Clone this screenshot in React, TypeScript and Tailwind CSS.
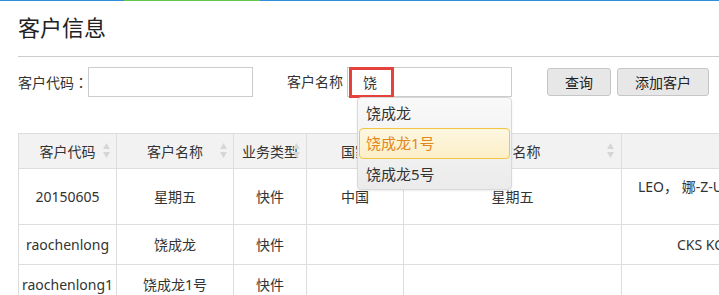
import React from "react";

function SortIcon({ right = 6 }: { right?: number }) {
  return (
    <svg
      width="7"
      height="15"
      viewBox="0 0 7 15"
      className={right === 7 ? "absolute right-[7px] top-[9px]" : "absolute right-[6px] top-[9px]"}
    >
      <polygon points="0,6 3.5,0 7,6" fill="#d6d6d6" />
      <polygon points="0,9 3.5,15 7,9" fill="#d6d6d6" />
    </svg>
  );
}

const cell = "relative box-border shrink-0 border-r border-b border-[#dddddd] flex items-center justify-center text-[14px] whitespace-nowrap";

export default function App() {
  return (
    <div className="relative w-[719px] h-[295px] overflow-hidden bg-white font-['Noto_Sans','Noto_Sans_CJK_SC',sans-serif] text-[#333]">
      <div className="flex h-px">
        <div className="w-[124px] bg-[#2e90dc]" />
        <div className="w-[136px] bg-[#62c64a]" />
        <div className="flex-1 bg-[#2e90dc]" />
      </div>
      <div className="pl-[18px]">
        <h1 className="mt-[11px] text-[22px] leading-[30px] text-[#222]">客户信息</h1>
        <div className="mt-[14px] h-px bg-[#cccccc]" />

        <div className="mt-[10px] flex items-center h-[30px]">
          <span className="w-[70px] text-[14px] leading-[20px]">
            客户代码<span className="font-['Noto_Sans_CJK_TC',sans-serif]">：</span>
          </span>
          <div className="box-border w-[165px] h-[30px] border border-[#cccccc]" />
          <span className="ml-[34px] w-[56px] text-[14px] leading-[20px]">客户名称</span>
          <div className="relative box-border ml-[4px] w-[165px] h-[30px] border border-[#cccccc] pl-[15px] flex items-center text-[14px]">
            饶
            <div className="absolute left-px top-[-1px] box-border w-[45px] h-[31px] border-[3px] border-[#e5423b]" />
            <div className="absolute left-[9px] top-[29px] z-10 box-border w-[155px] h-[93px] border border-[#d9d9d9] rounded-[4px] bg-linear-to-b from-[#f9f9f9] to-[#ebebeb] shadow-[0_1px_2px_rgba(0,0,0,0.08)] flex flex-col text-[15px] text-[#333]">
              <div className="h-[30px] flex items-center pl-[8px]">饶成龙</div>
              <div className="mx-px box-border h-[32px] flex items-center pl-[6px] border border-[#f3c544] rounded-[4px] bg-linear-to-b from-[#fdf7e1] to-[#fcefc7] text-[#e3861d]">
                饶成龙1号
              </div>
              <div className="h-[30px] flex items-center pl-[8px]">饶成龙5号</div>
            </div>
          </div>
          <button className="ml-[35px] box-border w-[64px] h-[28px] border border-[#c6c6c6] rounded-[3px] bg-[#e7e7e7] text-[14px] text-[#222]">
            查询
          </button>
          <button className="ml-[6px] box-border w-[92px] h-[28px] border border-[#c6c6c6] rounded-[3px] bg-[#e7e7e7] text-[14px] text-[#222]">
            添加客户
          </button>
        </div>

        <div className="mt-[36px] w-[1100px] border-t border-l border-[#dddddd]">
          <div className="flex h-[35px] bg-[#f2f2f2]">
            <div className={`${cell} w-[98px]`}>客户代码<SortIcon /></div>
            <div className={`${cell} w-[117px]`}>客户名称<SortIcon /></div>
            <div className={`${cell} w-[73px]`}>业务类型<SortIcon /></div>
            <div className={`${cell} w-[97px]`}>国家<SortIcon /></div>
            <div className={`${cell} w-[218px]`}>英文名称<SortIcon right={7} /></div>
            <div className={`${cell} w-[400px]`} />
          </div>
          <div className="flex h-[56px]">
            <div className={`${cell} w-[98px]`}>20150605</div>
            <div className={`${cell} w-[117px]`}>星期五</div>
            <div className={`${cell} w-[73px]`}>快件</div>
            <div className={`${cell} w-[97px]`}>中国</div>
            <div className={`${cell} w-[218px]`}>星期五</div>
            <div className={`${cell} w-[400px] !items-start !justify-start pt-[8px] pl-[16px] leading-[20px]`}>LEO， 娜-Z-UNION</div>
          </div>
          <div className="flex h-[40px]">
            <div className={`${cell} w-[98px]`}>raochenlong</div>
            <div className={`${cell} w-[117px]`}>饶成龙</div>
            <div className={`${cell} w-[73px]`}>快件</div>
            <div className={`${cell} w-[97px]`} />
            <div className={`${cell} w-[218px]`} />
            <div className={`${cell} w-[400px] !justify-start pl-[55px]`}>CKS KOREA</div>
          </div>
          <div className="flex h-[40px]">
            <div className={`${cell} w-[98px]`}>raochenlong1</div>
            <div className={`${cell} w-[117px]`}>饶成龙1号</div>
            <div className={`${cell} w-[73px]`}>快件</div>
            <div className={`${cell} w-[97px]`} />
            <div className={`${cell} w-[218px]`} />
            <div className={`${cell} w-[400px]`} />
          </div>
        </div>
      </div>
    </div>
  );
}
